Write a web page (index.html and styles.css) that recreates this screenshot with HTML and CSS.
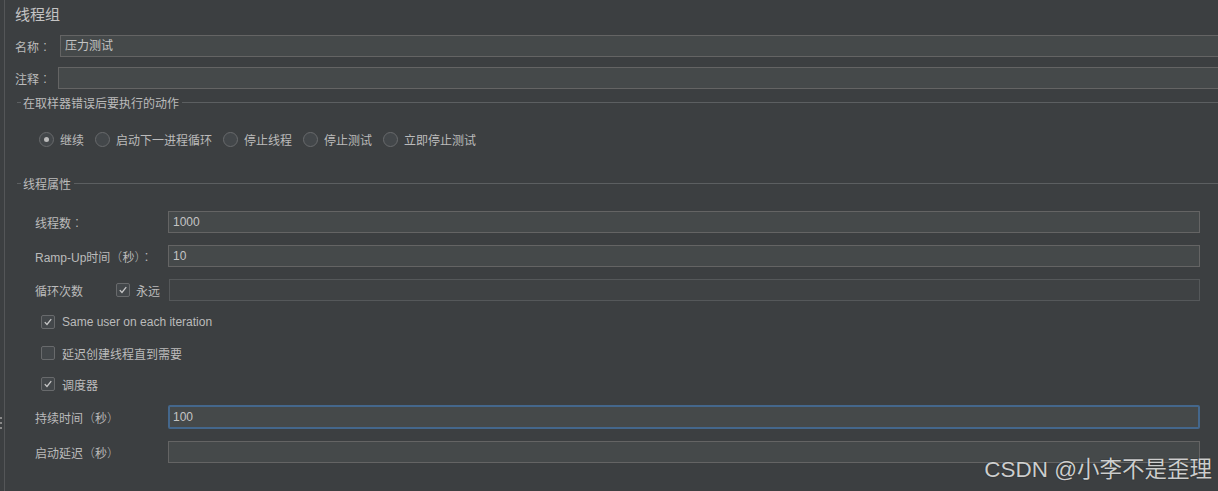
FILE: index.html
```html
<!DOCTYPE html>
<html lang="zh-CN">
<head>
  <meta charset="UTF-8">
  <meta name="viewport" content="width=device-width, initial-scale=1.0">
  <title>线程组</title>
  <link rel="stylesheet" href="styles.css">
</head>
<body>
  <div class="frame">
    <span class="grip"></span>
    <div class="panel">
      <h2 class="title">线程组</h2>

      <div class="field-row">
        <label class="lbl-name">名称<span class="p" lang="ja">：</span></label>
        <div class="text-box wide">压力测试</div>
      </div>
      <div class="field-row second">
        <label class="lbl-comment">注释<span class="p" lang="ja">：</span></label>
        <div class="text-box wide"></div>
      </div>

      <div class="group-title first-group"><span>在取样器错误后要执行的动作</span></div>
      <div class="radio-row">
        <span class="radio checked"></span><span class="radio-label">继续</span>
        <span class="radio"></span><span class="radio-label">启动下一进程循环</span>
        <span class="radio"></span><span class="radio-label">停止线程</span>
        <span class="radio"></span><span class="radio-label">停止测试</span>
        <span class="radio"></span><span class="radio-label">立即停止测试</span>
      </div>

      <div class="group-title second-group"><span>线程属性</span></div>
      <div class="props">
        <div class="prop-row top">
          <label class="prop-label">线程数<span class="p" lang="ja">：</span></label>
          <div class="text-box">1000</div>
        </div>
        <div class="prop-row">
          <label class="prop-label">Ramp-Up时间<span class="p" lang="ja">（</span>秒<span class="p" lang="ja">）：</span></label>
          <div class="text-box">10</div>
        </div>
        <div class="prop-row">
          <label class="loop-label">循环次数</label>
          <span class="check on">
            <svg viewBox="0 0 13 13"><path d="M3 6.6 L5.4 9.2 L10 3.4" /></svg>
          </span>
          <span class="loop-forever">永远</span>
          <div class="text-box off"></div>
        </div>

        <div class="check-row">
          <span class="check on">
            <svg viewBox="0 0 13 13"><path d="M3 6.6 L5.4 9.2 L10 3.4" /></svg>
          </span>
          <span>Same user on each iteration</span>
        </div>
        <div class="check-row">
          <span class="check"></span>
          <span>延迟创建线程直到需要</span>
        </div>
        <div class="check-row">
          <span class="check on">
            <svg viewBox="0 0 13 13"><path d="M3 6.6 L5.4 9.2 L10 3.4" /></svg>
          </span>
          <span>调度器</span>
        </div>

        <div class="prop-row after-checks">
          <label class="prop-label">持续时间<span class="p" lang="ja">（</span>秒<span class="p" lang="ja">）</span></label>
          <div class="text-box focused">100</div>
        </div>
        <div class="prop-row">
          <label class="prop-label">启动延迟<span class="p" lang="ja">（</span>秒<span class="p" lang="ja">）</span></label>
          <div class="text-box"></div>
        </div>
      </div>
    </div>
  </div>
  <div class="watermark">CSDN @小李不是歪理</div>
</body>
</html>
```

FILE: styles.css
```css
body {
  margin: 0;
  background: #3c3f41;
  color: #bbbbbb;
  font-family: "Liberation Sans", "Noto Sans CJK SC", sans-serif;
  font-size: 12px;
  overflow: hidden;
  height: 491px;
}

/* full-width punctuation drawn centred in its cell */
.p {
  font-family: "Noto Sans CJK JP", sans-serif;
  font-weight: 300;
}

.frame {
  position: relative;
  margin-left: 4px;
  border-left: 1px solid #545658;
  height: 491px;
}

/* little splitter handle on the left edge */
.grip {
  position: absolute;
  left: -5px;
  top: 417px;
  width: 2px;
  height: 14px;
  background: repeating-linear-gradient(#8a8a8a 0 2px, transparent 2px 5px);
}

.panel {
  padding-left: 10px;
}

.title {
  margin: 0;
  height: 30px;
  line-height: 30px;
  font-size: 15px;
  font-weight: normal;
  color: #c4c4c4;
}

.field-row {
  display: flex;
  align-items: center;
  margin-top: 5px;
  margin-right: -20px;
}
.field-row.second {
  margin-top: 10px;
}
.lbl-name {
  width: 45px;
}
.lbl-comment {
  width: 43px;
}

.text-box {
  box-sizing: border-box;
  height: 22px;
  line-height: 20px;
  padding-left: 4px;
  background: #45494a;
  border: 1px solid #646464;
  color: #c4c4c4;
  flex: 1;
}
.text-box.off {
  background: #3f4244;
  border-color: #55585a;
}
.text-box.focused {
  height: 24px;
  line-height: 20px;
  border: 2px solid #44678c;
  border-radius: 2px;
  padding-left: 3px;
}

.group-title {
  display: flex;
  align-items: center;
  height: 16px;
  margin-right: -20px;
}
.group-title::before {
  content: "";
  width: 4px;
  margin-left: 2px;
  border-top: 1px solid #5c5f61;
}
.group-title::after {
  content: "";
  flex: 1;
  border-top: 1px solid #5c5f61;
}
.group-title span {
  padding: 0 3px 0 2px;
}
.first-group {
  margin-top: 5px;
}
.second-group {
  margin-top: 25px;
}

.radio-row {
  display: flex;
  align-items: center;
  height: 22px;
  margin-top: 18px;
  padding-left: 24px;
}
.radio {
  box-sizing: border-box;
  width: 15px;
  height: 15px;
  border: 1px solid #686a6c;
  border-radius: 50%;
  background: #43474a;
  display: flex;
  align-items: center;
  justify-content: center;
}
.radio.checked::after {
  content: "";
  width: 5px;
  height: 5px;
  border-radius: 50%;
  background: #bbbbbb;
}
.radio-label {
  margin-left: 6px;
  margin-right: 11px;
}

.props {
  padding-left: 20px;
  padding-right: 18px;
}

.prop-row {
  display: flex;
  align-items: center;
  margin-top: 12px;
}
.prop-row.top {
  margin-top: 20px;
}
.prop-row.after-checks {
  margin-top: 11px;
}
.prop-label {
  width: 133px;
  white-space: nowrap;
}
.loop-label {
  width: 81px;
}
.loop-forever {
  margin-left: 6px;
  width: 33px;
}

.check {
  box-sizing: border-box;
  width: 14px;
  height: 14px;
  border: 1px solid #686a6c;
  border-radius: 2px;
  background: #43474a;
  display: inline-flex;
}
.check svg {
  width: 12px;
  height: 12px;
}
.check path {
  fill: none;
  stroke: #c8c8c8;
  stroke-width: 1.4;
}

.check-row {
  display: flex;
  align-items: center;
  height: 20px;
  margin-top: 11px;
  padding-left: 6px;
}
.check-row .check {
  margin-right: 7px;
}

.watermark {
  position: absolute;
  right: 6px;
  bottom: 8px;
  font-size: 22.5px;
  color: #e6e6e6;
  opacity: 0.85;
  text-shadow: 0 0 1px #000;
}
```
